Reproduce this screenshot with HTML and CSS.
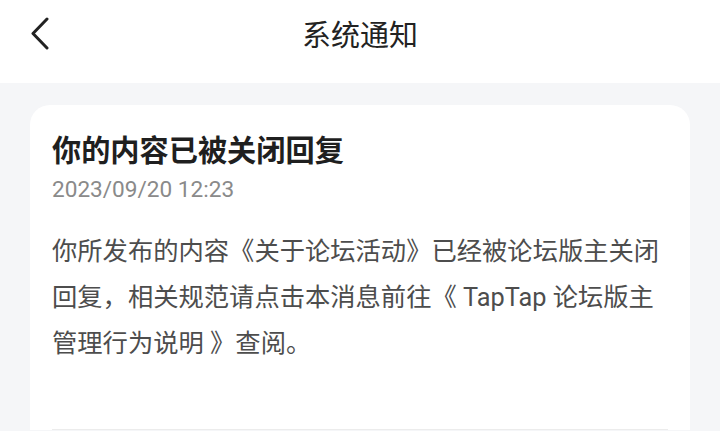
FILE: index.html
```html
<!DOCTYPE html>
<html lang="zh-CN">
<head>
<meta charset="utf-8">
<title>系统通知</title>
<link rel="stylesheet" href="styles.css">
</head>
<body>
<header class="navbar">
  <div class="nav-left">
    <svg class="back-icon" width="20" height="34" viewBox="0 0 20 34" aria-hidden="true">
      <polyline points="16,3 2,17.5 16,32" fill="none" stroke="#222" stroke-width="3" stroke-linecap="round" stroke-linejoin="round"/>
    </svg>
  </div>
  <h1 class="nav-title">系统通知</h1>
  <div class="nav-right"></div>
</header>
<main class="content">
  <article class="card">
    <h2 class="card-title">你的内容已被关闭回复</h2>
    <div class="card-date">2023/09/20 12:23</div>
    <p class="card-body">你所发布的内容《关于论坛活动》已经被论坛版主关闭回复，相关规范请点击本消息前往《 TapTap 论坛版主管理行为说明 》查阅。</p>
    <div class="divider"></div>
  </article>
</main>
</body>
</html>
```
FILE: styles.css
```css
* { box-sizing: border-box; }
html, body {
  margin: 0;
  padding: 0;
}
body {
  background: #f5f6f8;
  font-family: Roboto, "Noto Sans CJK SC", sans-serif;
  width: 720px;
  height: 431px;
  overflow: hidden;
}
.navbar {
  background: #ffffff;
  height: 83px;
  padding-bottom: 17px;
  display: grid;
  grid-template-columns: 1fr auto 1fr;
  align-items: center;
}
.nav-left {
  padding-left: 31px;
  display: flex;
  align-items: center;
}
.back-icon { display: block; }
.nav-title {
  margin: 0;
  font-family: "Noto Sans CJK SC", sans-serif;
  font-weight: 400;
  font-size: 29px;
  line-height: 40px;
  color: #222;
}
.content {
  padding: 22px 30px 0 30px;
}
.card {
  background: #ffffff;
  border-radius: 20px 20px 0 0;
  padding: 23px 22px 0 22px;
}
.card-title {
  margin: 0;
  font-family: "Noto Sans CJK SC", sans-serif;
  font-weight: 700;
  font-size: 29.2px;
  line-height: 40px;
  color: #1f1f1f;
}
.card-date {
  margin-top: 7px;
  font-size: 22.6px;
  line-height: 30px;
  color: #8a8a8a;
}
.card-body {
  margin: 24px 0 0 0;
  font-size: 25.3px;
  line-height: 46px;
  color: #4d4d4d;
  width: 616px;
}
.divider {
  margin-top: 62px;
  height: 1px;
  background: #ececec;
}
```
